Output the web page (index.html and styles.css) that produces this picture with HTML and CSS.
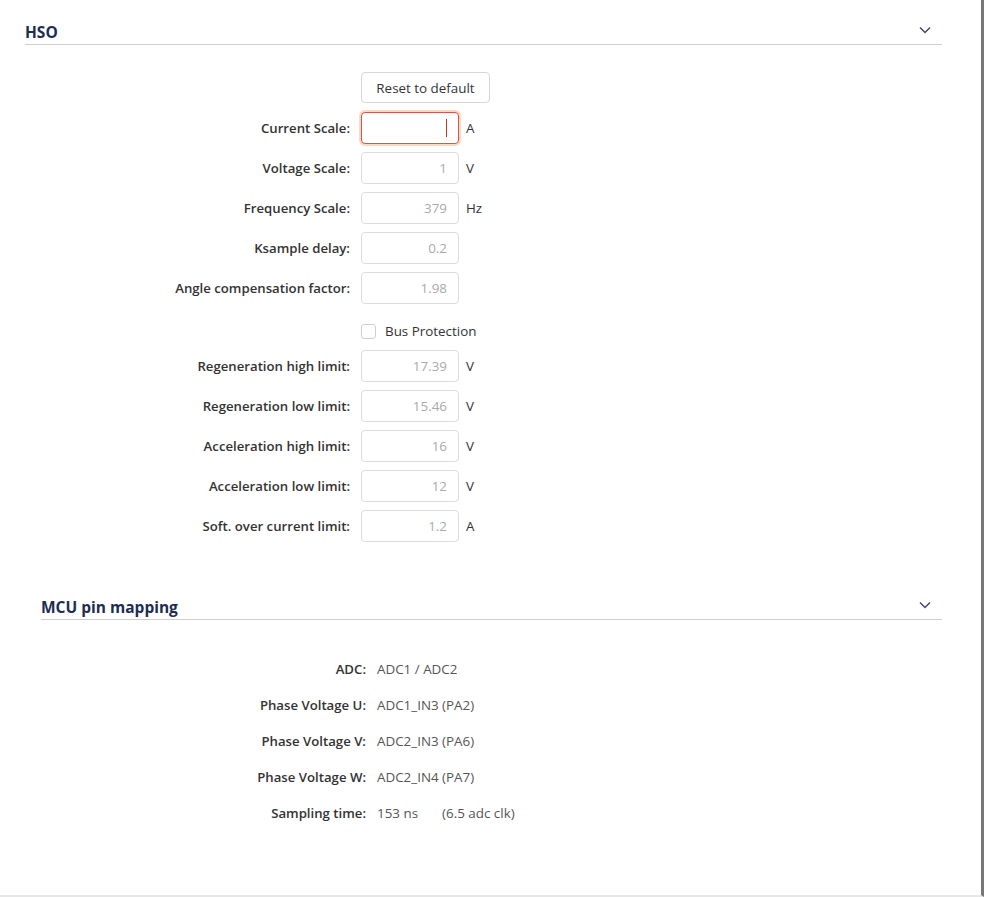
FILE: index.html
```html
<!DOCTYPE html>
<html lang="en">
<head>
    <meta charset="UTF-8">
    <meta name="viewport" content="width=device-width, initial-scale=1.0">
    <title>HSO settings</title>
    <link rel="stylesheet" href="styles.css">
</head>
<body>
    <div class="page">
        <div class="section section-hso">
            <div class="section-header">
                <span class="section-title">HSO</span>
                <svg class="chevron" width="12" height="8" viewBox="0 0 12 8"><path d="M1 1.5 L6 6.5 L11 1.5" fill="none" stroke="#3d4c6b" stroke-width="1.5"/></svg>
            </div>
            <div class="form">
                <div class="row">
                    <div class="label"></div>
                    <button class="reset-button">Reset to default</button>
                </div>
                <div class="row">
                    <label class="label">Current Scale:</label>
                    <span class="field-wrap">
                        <input class="field field-focus" type="text" value="">
                        <span class="caret"></span>
                    </span>
                    <span class="unit">A</span>
                </div>
                <div class="row">
                    <label class="label">Voltage Scale:</label>
                    <input class="field" type="text" value="1">
                    <span class="unit">V</span>
                </div>
                <div class="row">
                    <label class="label">Frequency Scale:</label>
                    <input class="field" type="text" value="379">
                    <span class="unit">Hz</span>
                </div>
                <div class="row">
                    <label class="label">Ksample delay:</label>
                    <input class="field" type="text" value="0.2">
                </div>
                <div class="row">
                    <label class="label">Angle compensation factor:</label>
                    <input class="field" type="text" value="1.98">
                </div>
                <div class="row row-check">
                    <div class="label"></div>
                    <span class="checkbox"></span>
                    <span class="check-text">Bus Protection</span>
                </div>
                <div class="row">
                    <label class="label">Regeneration high limit:</label>
                    <input class="field" type="text" value="17.39">
                    <span class="unit">V</span>
                </div>
                <div class="row">
                    <label class="label">Regeneration low limit:</label>
                    <input class="field" type="text" value="15.46">
                    <span class="unit">V</span>
                </div>
                <div class="row">
                    <label class="label">Acceleration high limit:</label>
                    <input class="field" type="text" value="16">
                    <span class="unit">V</span>
                </div>
                <div class="row">
                    <label class="label">Acceleration low limit:</label>
                    <input class="field" type="text" value="12">
                    <span class="unit">V</span>
                </div>
                <div class="row">
                    <label class="label">Soft. over current limit:</label>
                    <input class="field" type="text" value="1.2">
                    <span class="unit">A</span>
                </div>
            </div>
        </div>

        <div class="section section-mcu">
            <div class="section-header">
                <span class="section-title">MCU pin mapping</span>
                <svg class="chevron" width="12" height="8" viewBox="0 0 12 8"><path d="M1 1.5 L6 6.5 L11 1.5" fill="none" stroke="#3d4c6b" stroke-width="1.5"/></svg>
            </div>
            <div class="pins">
                <div class="pin-row">
                    <span class="label">ADC:</span>
                    <span class="value">ADC1 / ADC2</span>
                </div>
                <div class="pin-row">
                    <span class="label">Phase Voltage U:</span>
                    <span class="value">ADC1_IN3 (PA2)</span>
                </div>
                <div class="pin-row">
                    <span class="label">Phase Voltage V:</span>
                    <span class="value">ADC2_IN3 (PA6)</span>
                </div>
                <div class="pin-row">
                    <span class="label">Phase Voltage W:</span>
                    <span class="value">ADC2_IN4 (PA7)</span>
                </div>
                <div class="pin-row">
                    <span class="label">Sampling time:</span>
                    <span class="value">153 ns</span>
                    <span class="value value-note">(6.5 adc clk)</span>
                </div>
            </div>
        </div>
    </div>
</body>
</html>
```

FILE: styles.css
```css
body {
    margin: 0;
    background-color: #fff;
    font-family: 'Open Sans', 'Noto Sans', Arial, sans-serif;
    font-size: 13.4px;
    color: #333;
}

.page {
    width: 981px;
    height: 895px;
    border-right: 3px solid #777;
    border-bottom: 2px solid #e6e6e6;
    overflow: hidden;
}

.section {
    margin-right: 39px;
}

.section-hso {
    padding-top: 19px;
    padding-left: 25px;
    height: 575px;
}

.section-mcu {
    padding-left: 41px;
}

.section-header {
    display: flex;
    justify-content: space-between;
    align-items: center;
    height: 25px;
    border-bottom: 1px solid #cfcfcf;
}

.section-title {
    font-size: 15.5px;
    font-weight: 700;
    color: #1c2d4f;
    margin-top: 1px;
}

.chevron {
    margin-right: 11px;
    margin-bottom: 4px;
}

.form {
    margin-top: 27px;
}

.row {
    display: flex;
    align-items: center;
    height: 32px;
    margin-bottom: 8px;
}

.row-check {
    height: 38px;
    margin-bottom: 0;
}

.label {
    width: 325px;
    flex-shrink: 0;
    text-align: right;
    font-weight: 600;
    font-size: 13.2px;
    color: #333;
    margin-right: 11px;
}

.reset-button {
    height: 31px;
    width: 129px;
    padding: 0;
    background-color: #fff;
    border: 1px solid #d6d6d6;
    border-radius: 4px;
    font-family: inherit;
    font-size: 13.4px;
    color: #333;
    margin-top: -1px;
}

.field {
    box-sizing: border-box;
    width: 98px;
    height: 32px;
    padding: 0 11px;
    border: 1px solid #dcdcdc;
    border-radius: 4px;
    font-family: inherit;
    font-size: 13.4px;
    color: #aaa;
    text-align: right;
    outline: none;
}

.field-wrap {
    position: relative;
    display: flex;
}

.field-focus {
    border-color: #d9534f;
    box-shadow: 0 0 0 2px #fcd9c2;
}

/* text cursor of the focused field */
.caret {
    position: absolute;
    right: 12px;
    top: 7px;
    width: 1px;
    height: 18px;
    background-color: #c0392b;
}

.unit {
    margin-left: 7px;
    color: #333;
}

.checkbox {
    box-sizing: border-box;
    width: 15px;
    height: 15px;
    border: 1px solid #cfcfcf;
    border-radius: 3px;
    margin-right: 9px;
}

.check-text {
    color: #333;
}

.pins {
    padding-top: 39px;
}

.pin-row {
    display: flex;
    align-items: center;
    height: 20px;
    margin-bottom: 16px;
}

.value {
    color: #555;
}

.value-note {
    margin-left: 24px;
}
```
